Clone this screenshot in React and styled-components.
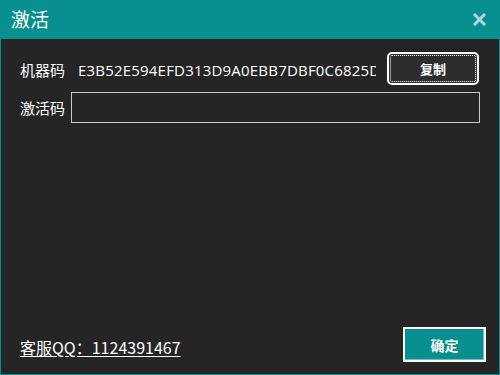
import React from "react";
import styled, { createGlobalStyle } from "styled-components";

const Global = createGlobalStyle`
  html, body { margin: 0; padding: 0; background: #252525; }
  * { box-sizing: border-box; }
`;

const TEAL = "#088f8f";

const Window = styled.div`
  width: 500px;
  height: 375px;
  border: 1px solid ${TEAL};
  border-top: none;
  background: #252525;
  display: flex;
  flex-direction: column;
  font-family: "Open Sans", "Noto Sans CJK SC", sans-serif;
  color: #fff;
  overflow: hidden;
`;

const TitleBar = styled.div`
  height: 39px;
  background: ${TEAL};
  display: flex;
  align-items: center;
  justify-content: space-between;
  padding: 0 13px 0 10px;
  flex-shrink: 0;
`;

const Title = styled.div`
  font-family: "Noto Sans CJK SC", sans-serif;
  font-size: 19px;
  color: #fff;
  line-height: 1;
  margin-top: -2px;
`;

const Close = styled.button`
  width: 14px;
  height: 14px;
  padding: 0;
  border: none;
  background: transparent;
  display: flex;
  align-items: center;
  justify-content: center;
  margin-top: -1px;
`;

const Body = styled.div`
  flex: 1;
  display: flex;
  flex-direction: column;
  padding: 13px 19px 12px 19px;
`;

const Row = styled.div`
  display: flex;
  align-items: center;
  height: ${(p) => p.$h}px;
  margin-bottom: ${(p) => p.$mb || 0}px;
`;

const Label = styled.div`
  width: 51px;
  flex-shrink: 0;
  font-family: "Noto Sans CJK SC", sans-serif;
  font-size: 15px;
  margin-top: ${(p) => p.$mt || 0}px;
`;

const Code = styled.div`
  flex: 1;
  min-width: 0;
  margin: 0 11px 0 7px;
  white-space: nowrap;
  overflow: hidden;
  font-size: 15px;
  letter-spacing: 0.2px;
  margin-top: 2px;
`;

const CopyButton = styled.button`
  width: 92px;
  height: 33px;
  margin-right: 1px;
  border: 2px solid #fff;
  border-radius: 5px;
  background: #2d2d2d;
  color: #fff;
  font-family: "Noto Sans CJK SC", sans-serif;
  font-weight: 700;
  font-size: 13px;
  outline: 1px dotted #fff;
  outline-offset: -4px;
  flex-shrink: 0;
  cursor: pointer;
`;

const Input = styled.input`
  flex: 1;
  height: 31px;
  background: #252525;
  border: 1px solid #c8c8c8;
  color: #fff;
  font-size: 14px;
  padding: 0 4px;
  outline: none;
`;

const Footer = styled.div`
  margin-top: auto;
  display: flex;
  align-items: flex-end;
  justify-content: space-between;
`;

const Link = styled.a`
  font-family: "Noto Sans CJK SC", sans-serif;
  font-size: 16px;
  line-height: 1.2;
  color: #fff;
  text-decoration: underline;
  text-underline-offset: 2px;
  margin-bottom: 5px;
  cursor: pointer;
`;

const OkButton = styled.button`
  width: 83px;
  height: 35px;
  margin-right: -6px;
  border: 2px solid #fff;
  background: ${TEAL};
  box-shadow: inset -1px -1px 0 #6cc0c0, inset 1px 1px 0 #0a8a8a;
  color: #fff;
  font-family: "Noto Sans CJK SC", sans-serif;
  font-weight: 700;
  font-size: 14px;
  cursor: pointer;
`;

export default function App() {
  return (
    <>
      <Global />
      <Window>
        <TitleBar>
          <Title>激活</Title>
          <Close aria-label="close">
            <svg width="13" height="13" viewBox="0 0 13 13">
              <path d="M2 2 L11 11 M11 2 L2 11" stroke="#a6dcdc" strokeWidth="3" strokeLinecap="square" />
            </svg>
          </Close>
        </TitleBar>
        <Body>
          <Row $h={33} $mb={7}>
            <Label $mt={2}>机器码</Label>
            <Code>E3B52E594EFD313D9A0EBB7DBF0C6825D</Code>
            <CopyButton>复制</CopyButton>
          </Row>
          <Row $h={31}>
            <Label>激活码</Label>
            <Input />
          </Row>
          <Footer>
            <Link>客服QQ：1124391467</Link>
            <OkButton>确定</OkButton>
          </Footer>
        </Body>
      </Window>
    </>
  );
}
